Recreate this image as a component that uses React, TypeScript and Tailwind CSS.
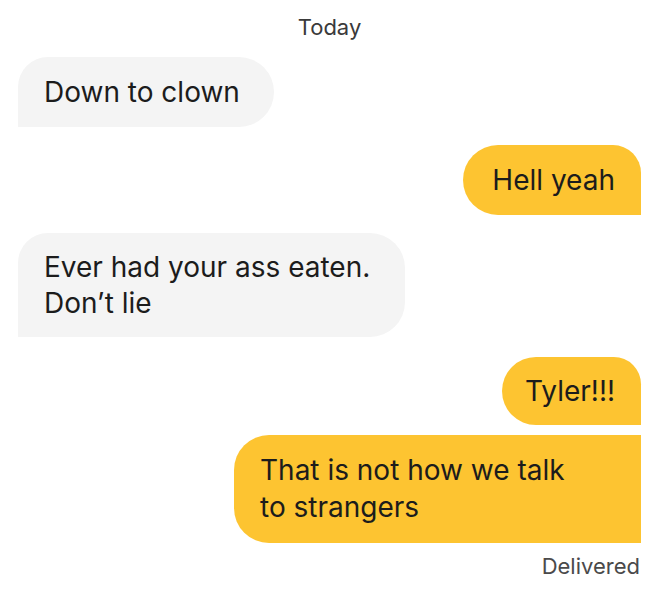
import React from "react";

export default function App() {
  return (
    <div
      className="w-[659px] h-[600px] bg-white flex flex-col px-[18px] text-[#1c1c1c]"
      style={{ fontFamily: "Inter, 'Noto Sans', sans-serif" }}
    >
      <div className="h-[57px] flex justify-center pt-[12px] text-[22px] leading-[30px] text-[#3a3a3a]">Today</div>
      <div className="flex">
        <div className="bg-[#f4f4f4] rounded-tl-[30px] rounded-r-[35px] w-[256px] h-[70px] flex items-center px-[26px] text-[28px] leading-[36px]">
          Down to clown
        </div>
      </div>
      <div className="flex justify-end mt-[18px]">
        <div className="bg-[#fdc431] rounded-l-[35px] rounded-tr-[28px] w-[178px] h-[70px] flex items-center justify-end pr-[26px] text-[28px] leading-[36px]">
          Hell yeah
        </div>
      </div>
      <div className="flex mt-[18px]">
        <div className="bg-[#f4f4f4] rounded-tl-[30px] rounded-r-[35px] w-[387px] py-[16px] px-[26px] text-[28px] leading-[36px]">
          Ever had your ass eaten.
          <br />
          Don’t lie
        </div>
      </div>
      <div className="flex justify-end mt-[20px]">
        <div className="bg-[#fdc431] rounded-l-[35px] rounded-tr-[28px] w-[139px] h-[68px] flex items-center justify-end pr-[26px] text-[28px] leading-[36px]">
          Tyler!!!
        </div>
      </div>
      <div className="flex justify-end mt-[10px]">
        <div className="bg-[#fdc431] rounded-l-[35px] w-[407px] py-[17px] pl-[26px] text-[28px] leading-[37px]">
          That is not how we talk
          <br />
          to strangers
        </div>
      </div>
      <div className="flex justify-end mt-[8px] pr-[1px] text-[22px] leading-[30px] text-[#4a4a4a]">Delivered</div>
    </div>
  );
}
